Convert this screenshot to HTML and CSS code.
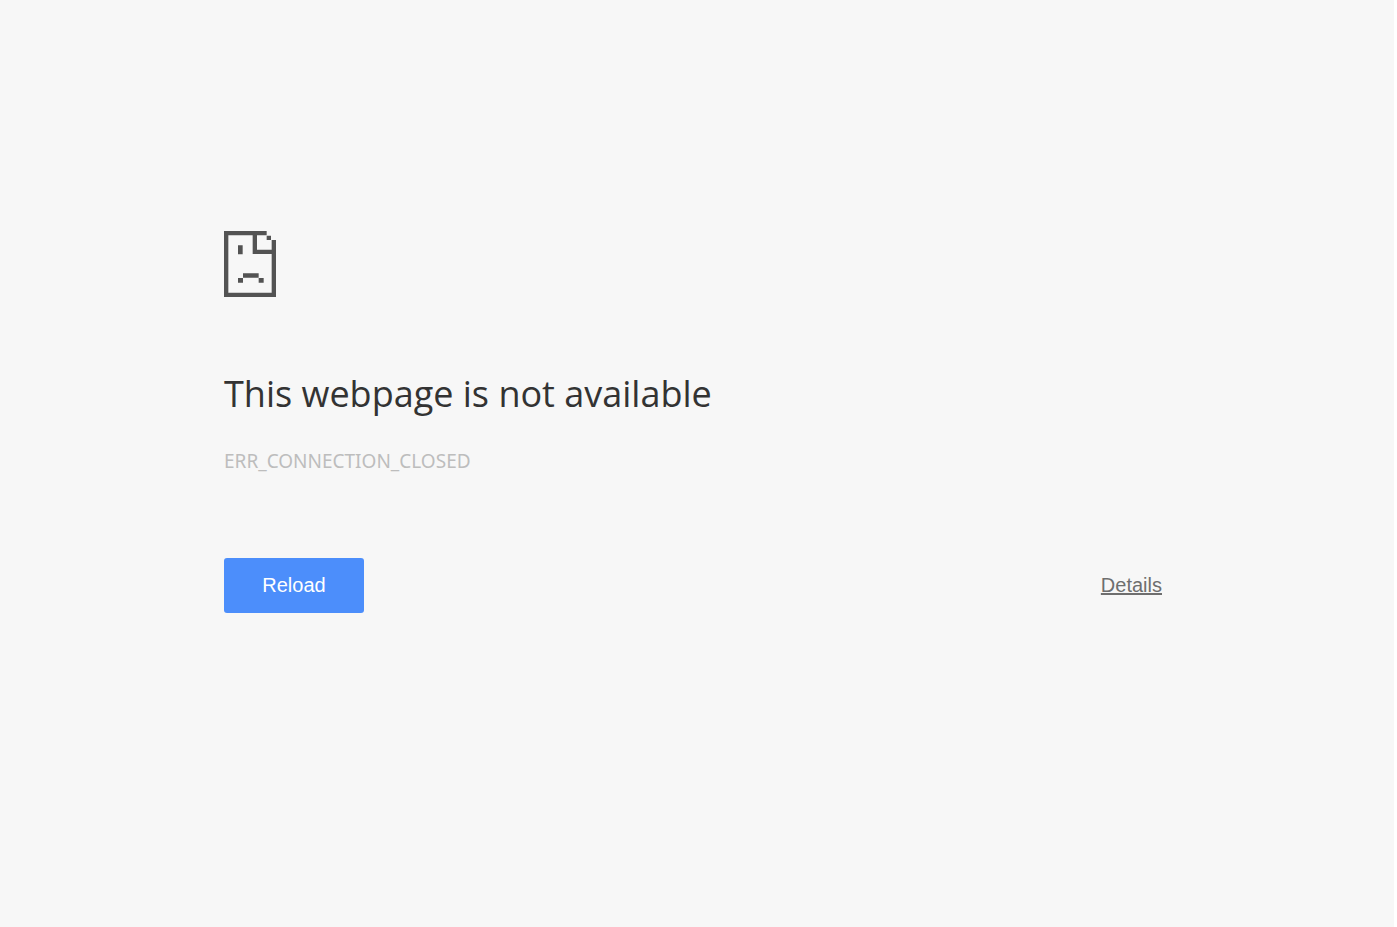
FILE: index.html
```html
<!DOCTYPE html>
<html lang="en">
<head>
<meta charset="utf-8">
<title>This webpage is not available</title>
<link rel="stylesheet" href="styles.css">
</head>
<body>
<div class="page">
  <main class="content">
    <svg class="icon" viewBox="0 0 156 198" aria-hidden="true">
      <path d="M0 0H128V13H99V56H143V27H156V198H0ZM13 13V185H143V69H86V13Z" fill-rule="evenodd"/>
      <path d="M128 14h13v13h-13zM42 43h14v27H42zM57 127h47v13H57zM42 141h15v14H42zM104 141h15v14h-15z"/>
    </svg>
    <h1 class="title">This webpage is not available</h1>
    <p class="code">ERR_CONNECTION_CLOSED</p>
    <div class="actions">
      <button class="reload" type="button">Reload</button>
      <a class="details" href="#">Details</a>
    </div>
  </main>
</div>
</body>
</html>
```
FILE: styles.css
```css
html {
  background: #fff;
}

body {
  margin: 0;
  padding-right: 3px;
}

.page {
  box-sizing: border-box;
  min-height: 100vh;
  padding: 231px 32px 32px 24px;
  background: #f7f7f7;
}

.content {
  max-width: 938px;
  margin: 0 auto;
}

.icon {
  display: block;
  width: 52px;
  height: 66px;
  fill: #535353;
}

.title {
  margin: 72px 0 0;
  color: #333;
  font: 400 36px/50px "Open Sans", "Noto Sans", sans-serif;
}

.code {
  margin: 28px 0 0;
  color: #bdbdbd;
  font: 400 19px/28px "Noto Sans", "Open Sans", sans-serif;
}

.actions {
  display: flex;
  align-items: center;
  justify-content: space-between;
  margin-top: 83px;
}

.reload {
  height: 55px;
  min-width: 140px;
  padding: 0 0 2px;
  border: 0;
  border-radius: 3px;
  background: #4c8efb;
  color: #fff;
  font: 20px/24px "Liberation Sans", Arial, sans-serif;
  cursor: pointer;
}

.details {
  padding-bottom: 2px;
  color: #6e6e6e;
  font: 20px/24px "Liberation Sans", Arial, sans-serif;
  text-decoration: underline;
}
```
